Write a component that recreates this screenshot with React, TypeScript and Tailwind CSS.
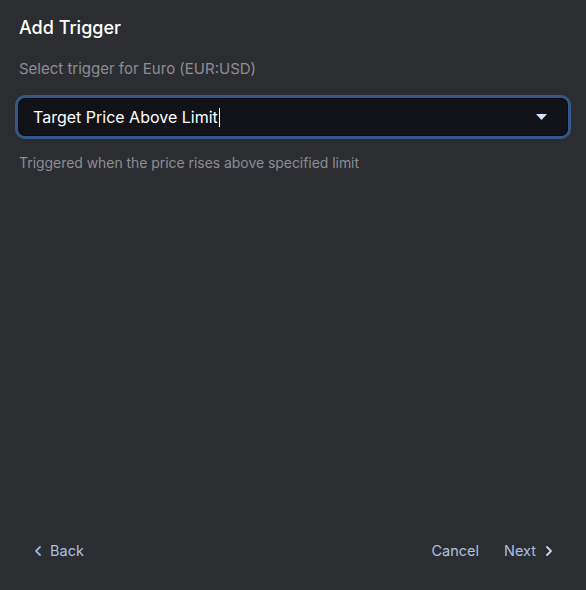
import React, { useState } from 'react';
import { ChevronLeft, ChevronRight } from 'lucide-react';

const options = [
  'Target Price Above Limit',
  'Target Price Below Limit',
  'Percent Change Up',
  'Percent Change Down',
];

const App: React.FC = () => {
  const [value, setValue] = useState(options[0]);

  return (
    <div
      className="flex h-[590px] w-full flex-col bg-[#2c2d31] px-[19px] pt-[16px] pb-[28px] text-white"
      style={{ fontFamily: 'Inter, "Noto Sans", sans-serif' }}
    >
      <h1 className="text-[18px] font-medium leading-[24px]">Add Trigger</h1>
      <p className="mt-[19px] text-[15px] leading-[20px] text-[#8c8e94]">
        Select trigger for Euro (EUR:USD)
      </p>

      {/* Trigger select */}
      <div className="relative mt-[16px] -mx-[4px] rounded-[10px] border-[3px] border-[#36578a] bg-[#111318]">
        <div className="flex h-[38px] items-center rounded-[8px] border border-[#0a0b0e] pl-[14px] pr-[20px]">
          <span className="text-[16px] text-white">{value}</span>
          <span className="ml-[1px] h-[19px] w-[1.5px] bg-white" />
          <svg className="ml-auto" width="11" height="6" viewBox="0 0 11 6">
            <path d="M0 0 H11 L5.5 6 Z" fill="#d6e4f7" />
          </svg>
        </div>
        <select
          value={value}
          onChange={(e) => setValue(e.target.value)}
          className="absolute inset-0 cursor-pointer opacity-0"
        >
          {options.map((o) => (
            <option key={o}>{o}</option>
          ))}
        </select>
      </div>

      <p className="mt-[15px] text-[14px] leading-[18px] tracking-[-0.05px] text-[#8c8e94]">
        Triggered when the price rises above specified limit
      </p>

      <div className="mt-auto flex items-center text-[14.5px] text-[#a9c1e3]">
        <button className="ml-[11px] flex items-center gap-[4px]">
          <ChevronLeft className="h-[16px] w-[16px] text-[#8fb3e6]" strokeWidth={2.75} />
          Back
        </button>
        <button className="ml-auto">Cancel</button>
        <button className="ml-[25px] mr-[10px] flex items-center gap-[5px]">
          Next
          <ChevronRight className="h-[16px] w-[16px] text-[#c4d6ef]" strokeWidth={2.75} />
        </button>
      </div>
    </div>
  );
};

export default App;
